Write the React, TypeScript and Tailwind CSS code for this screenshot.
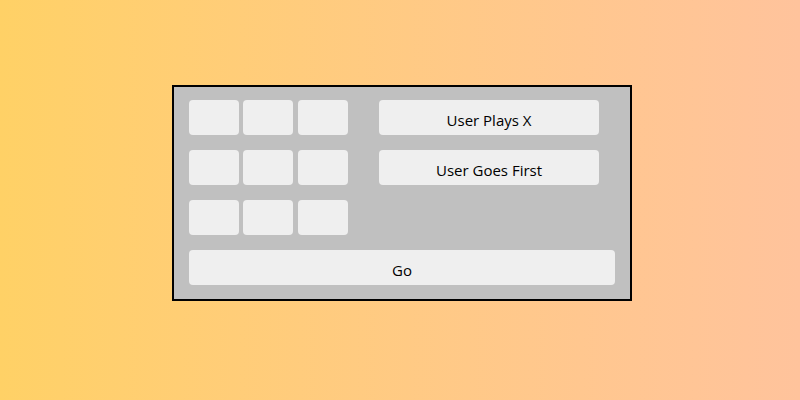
import React from "react";

const Cell = ({ className = "" }: { className?: string }) => (
  <button className={`h-[35px] w-[50px] rounded-[4px] bg-[#efefef] ${className}`} />
);

const Row = ({ label }: { label?: string }) => (
  <div className="flex h-[35px]">
    <Cell />
    <Cell className="ml-[4px]" />
    <Cell className="ml-[5px]" />
    {label && (
      <button className="ml-[31px] flex h-[35px] w-[220px] items-center justify-center rounded-[4px] bg-[#efefef] pt-[5px] text-[15px] text-black">
        {label}
      </button>
    )}
  </div>
);

export default function App() {
  return (
    <div
      className="h-[400px] w-[800px] bg-gradient-to-r from-[#ffd166] to-[#ffc39c] pl-[172px] pt-[85px]"
      style={{ fontFamily: '"Open Sans", "Noto Sans", sans-serif' }}
    >
      <div className="flex h-[216px] w-[460px] flex-col gap-[15px] border-2 border-black bg-[#c0c0c0] pb-[14px] pl-[15px] pr-[15px] pt-[13px]">
        <Row label="User Plays X" />
        <Row label="User Goes First" />
        <Row />
        <button className="flex h-[35px] w-[426px] items-center justify-center rounded-[4px] bg-[#efefef] pt-[5px] text-[15px] text-black">
          Go
        </button>
      </div>
    </div>
  );
}
